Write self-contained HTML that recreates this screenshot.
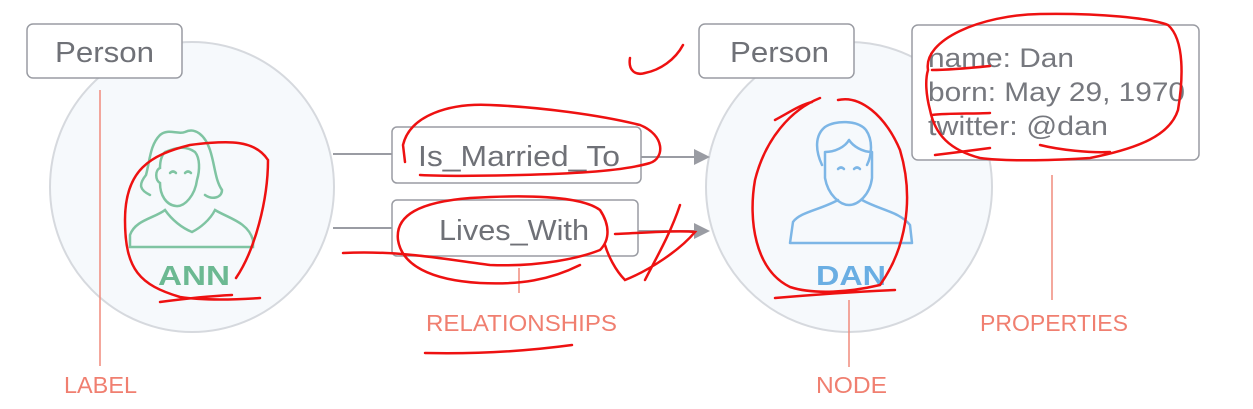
<!DOCTYPE html>
<html><head><meta charset="utf-8"><style>
html,body{margin:0;padding:0;background:#fff;}
svg{display:block}
text{font-family:"Liberation Sans",sans-serif;}
</style></head><body>
<svg width="1253" height="409" viewBox="0 0 1253 409" xmlns="http://www.w3.org/2000/svg">
<ellipse cx="192" cy="187" rx="142" ry="145" fill="#f6f9fc" stroke="#d6d9de" stroke-width="2"/>
<ellipse cx="849" cy="187" rx="143" ry="145" fill="#f6f9fc" stroke="#d6d9de" stroke-width="2"/>
<rect x="27" y="24" width="155" height="54" rx="6" fill="#fff" stroke="#9a9ca3" stroke-width="1.5"/>
<text x="55" y="62" font-size="29" fill="#6f7177" textLength="99" lengthAdjust="spacingAndGlyphs">Person</text>
<rect x="699" y="24" width="155" height="54" rx="6" fill="#fff" stroke="#9a9ca3" stroke-width="1.5"/>
<text x="730" y="62" font-size="29" fill="#6f7177" textLength="99" lengthAdjust="spacingAndGlyphs">Person</text>
<rect x="912" y="25" width="287" height="135" rx="6" fill="#fff" stroke="#9a9ca3" stroke-width="1.5"/>
<text x="928" y="67" font-size="27" fill="#76787e" textLength="146" lengthAdjust="spacingAndGlyphs">name: Dan</text>
<text x="928" y="101" font-size="27" fill="#76787e" textLength="257" lengthAdjust="spacingAndGlyphs">born: May 29, 1970</text>
<text x="928" y="135" font-size="27" fill="#76787e" textLength="180" lengthAdjust="spacingAndGlyphs">twitter: @dan</text>
<g stroke="#9a9ca3" stroke-width="2" fill="none">
<line x1="333" y1="154" x2="392" y2="154"/><line x1="641" y1="157" x2="696" y2="157"/>
<line x1="333" y1="228" x2="392" y2="228"/><line x1="638" y1="231" x2="696" y2="231"/>
</g>
<polygon points="694,149 710,157 694,165" fill="#9a9ca3"/>
<polygon points="694,223 710,231 694,239" fill="#9a9ca3"/>
<rect x="392" y="127" width="249" height="56" rx="5" fill="#fff" stroke="#9a9ca3" stroke-width="1.5"/>
<text x="418" y="166" font-size="29" fill="#6f7177" textLength="202" lengthAdjust="spacingAndGlyphs">Is_Married_To</text>
<rect x="392" y="200" width="246" height="56" rx="5" fill="#fff" stroke="#9a9ca3" stroke-width="1.5"/>
<text x="439" y="240" font-size="29" fill="#6f7177" textLength="150" lengthAdjust="spacingAndGlyphs">Lives_With</text>
<!-- Ann icon -->
<g stroke="#7fc4a2" stroke-width="2.5" fill="none" stroke-linecap="round">
<path d="M150,195 C140,190 138,185 146,175 C150,160 150,145 160,135 C168,128 178,135 185,132 C195,127 205,135 210,150 C215,165 215,180 222,190 C222,198 212,200 205,195"/>
<path d="M165,152 C175,148 185,145 195,152 C200,158 200,170 197,180 C195,195 185,207 176,206 C166,205 160,195 160,183 C155,180 155,170 160,168 C160,160 162,155 165,152Z"/>
<path d="M170,173 q3,-3 6,0 M185,173 q3,-3 6,0"/>
<path d="M165,210 C155,218 135,220 130,235 L130,247 L253,247 L253,240 C248,222 228,218 215,210 C210,220 200,228 192,232 C182,228 172,220 165,210Z"/>
</g>
<text x="158" y="285" font-size="28" font-weight="bold" fill="#6cb992" textLength="72" lengthAdjust="spacingAndGlyphs">ANN</text>
<!-- Dan icon -->
<g stroke="#7db6e6" stroke-width="2.5" fill="none" stroke-linecap="round" stroke-linejoin="round">
<path d="M822,165 C815,150 815,135 825,127 C835,120 858,120 866,130 C873,140 872,155 867,165"/>
<path d="M825,152 L825,178 C828,195 840,205 849,205 C858,205 870,195 872,178 L872,152 C862,152 853,146 849,140 C845,147 835,152 825,152Z"/>
<path d="M838,169 q3,-3 6,0 M854,169 q3,-3 6,0"/>
<path d="M838,200 C820,210 800,212 793,222 L790,243 L912,243 L910,225 C900,212 880,210 862,200"/>
</g>
<text x="816" y="285" font-size="28" font-weight="bold" fill="#6aaee3" textLength="70" lengthAdjust="spacingAndGlyphs">DAN</text>
<!-- annotations -->
<g stroke="#f08a7c" stroke-width="1.5">
<line x1="100" y1="90" x2="100" y2="366"/>
<line x1="519" y1="268" x2="519" y2="293"/>
<line x1="849" y1="300" x2="849" y2="367"/>
<line x1="1052" y1="175" x2="1052" y2="300"/>
</g>
<g font-size="23" fill="#f07f70">
<text x="64" y="393" textLength="73" lengthAdjust="spacingAndGlyphs">LABEL</text>
<text x="426" y="331" textLength="191" lengthAdjust="spacingAndGlyphs">RELATIONSHIPS</text>
<text x="816" y="393" textLength="71" lengthAdjust="spacingAndGlyphs">NODE</text>
<text x="980" y="331" textLength="148" lengthAdjust="spacingAndGlyphs">PROPERTIES</text>
</g>
<!-- red scribbles -->
<g stroke="#ee1111" stroke-width="2.5" fill="none" stroke-linecap="round">
<path d="M630,58 C628,70 635,76 645,73 C660,70 675,60 683,45"/>
<path d="M405,162 L403,145 C410,115 450,103 490,105 C540,107 600,115 640,125 C665,135 665,158 650,163 C620,172 560,174 520,175 C480,176 440,176 420,175"/>
<path d="M343,253 C400,250 450,260 490,265 C540,267 580,258 600,250 C610,240 610,225 600,210 C580,195 520,195 470,198 C420,202 395,215 398,240 C402,265 430,280 480,283 C520,285 550,280 580,265"/>
<path d="M615,234 C640,233 680,230 695,232 C680,250 650,270 625,280 C615,270 608,255 605,245 M680,205 C670,235 655,260 645,280"/>
<path d="M236,278 C255,250 268,200 268,160 C255,140 230,140 190,145 C150,155 125,170 125,220 C125,270 140,285 180,297 C200,300 230,300 260,298 M160,302 C190,298 210,296 232,295"/>
<path d="M820,98 C790,110 765,140 755,180 C748,220 755,270 790,287 C815,295 850,292 880,285 C905,250 915,200 900,150 C885,115 860,95 838,100 M775,120 C790,112 800,105 812,102 M775,298 C810,295 850,292 895,290"/>
<path d="M928,70 C923,40 980,15 1040,14 C1100,13 1150,18 1168,25 C1185,40 1183,80 1178,110 C1170,135 1140,148 1090,158 C1060,160 1010,162 980,158 C950,150 935,135 930,110 C926,95 925,80 928,70 M932,70 C950,70 970,68 990,66 M932,115 C950,113 970,114 990,113 M935,155 C960,152 975,150 990,148 M1040,145 C1060,150 1090,153 1110,152"/>
<path d="M425,353 C470,354 520,352 572,345"/>
</g>
</svg>
</body></html>
